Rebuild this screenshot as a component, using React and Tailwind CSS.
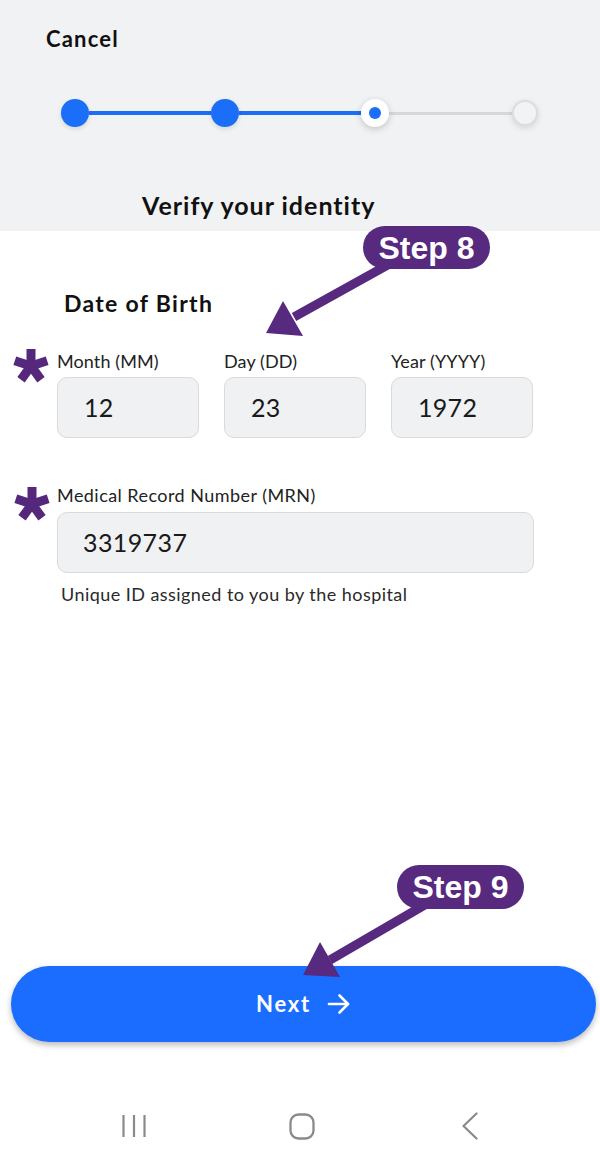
import React from "react";

function Asterisk({ className }) {
  const cx = 20, cy = 19, L = 17;
  const angles = [-90, -18, 54, 126, 198];
  return (
    <svg className={className} width="40" height="40" viewBox="0 0 40 40">
      {angles.map((a) => {
        const r = (a * Math.PI) / 180;
        return (
          <line
            key={a}
            x1={cx}
            y1={cy}
            x2={cx + L * Math.cos(r)}
            y2={cy + L * Math.sin(r)}
            stroke="#55287c"
            strokeWidth="9"
          />
        );
      })}
    </svg>
  );
}

function Field({ label, value }) {
  return (
    <div className="flex flex-col">
      <div className="text-[18px] leading-[22px] tracking-[0.1px] text-[#222]">{label}</div>
      <div className="mt-[5px] h-[61px] rounded-[10px] border border-[#d9dadd] bg-[#f0f1f3] flex items-center pl-[26px] text-[25px] tracking-[0.3px] text-[#1a1a1a]">
        {value}
      </div>
    </div>
  );
}

export default function App() {
  return (
    <div
      className="relative w-[600px] h-[1163px] overflow-hidden bg-white"
      style={{ fontFamily: "Lato, 'Open Sans', sans-serif" }}
    >
      {/* Header */}
      <div className="h-[231px] bg-[#f1f2f4] flex flex-col">
        <div className="pt-[26px] pl-[46px] text-[22px] leading-[26px] font-bold tracking-[1.2px] text-[#111]">
          Cancel
        </div>
        <div className="mt-[47px] h-[28px] flex items-center pl-[61px]">
          <div className="w-[28px] h-[28px] rounded-full bg-[#1b6ef7] shadow-[0_2px_5px_rgba(0,0,0,0.12)] relative z-10" />
          <div className="w-[122px] h-[4px] bg-[#1b6ef7]" />
          <div className="w-[28px] h-[28px] rounded-full bg-[#1b6ef7] shadow-[0_2px_5px_rgba(0,0,0,0.12)] relative z-10" />
          <div className="w-[122px] h-[4px] bg-[#1b6ef7]" />
          <div className="w-[28px] h-[28px] rounded-full bg-white shadow-[0_2px_7px_rgba(0,0,0,0.2)] flex items-center justify-center relative z-10">
            <div className="w-[12px] h-[12px] rounded-full bg-[#1b6ef7]" />
          </div>
          <div className="w-[123px] h-[3px] bg-[#d7d8da]" />
          <div className="w-[26px] h-[26px] rounded-full bg-[#f2f3f5] border-2 border-[#dcdddf] shadow-[0_2px_6px_rgba(0,0,0,0.12)]" />
        </div>
        <div className="mt-[63px] pl-[142px] text-[25px] leading-[30px] font-bold tracking-[1px] text-[#111]">
          Verify your identity
        </div>
      </div>

      {/* Body */}
      <div className="pl-[57px] w-[534px]">
        <div className="mt-[58px] pl-[7px] text-[23px] leading-[28px] font-bold tracking-[1.3px] text-[#111]">
          Date of Birth
        </div>
        <div className="mt-[33px] grid grid-cols-[142px_142px_142px] gap-x-[25px]">
          <Field label="Month (MM)" value="12" />
          <Field label="Day (DD)" value="23" />
          <Field label="Year (YYYY)" value="1972" />
        </div>
        <div className="mt-[46px] text-[18px] leading-[22px] tracking-[0.45px] text-[#222]">
          Medical Record Number (MRN)
        </div>
        <div className="mt-[6px] h-[61px] rounded-[10px] border border-[#d9dadd] bg-[#f0f1f3] flex items-center pl-[25px] text-[25px] tracking-[0.4px] text-[#1a1a1a]">
          3319737
        </div>
        <div className="mt-[10px] pl-[4px] text-[18px] leading-[22px] tracking-[0.45px] text-[#2a2a2a]">
          Unique ID assigned to you by the hospital
        </div>
      </div>

      {/* Next button */}
      <div className="mt-[361px] ml-[11px] w-[585px] h-[76px] rounded-full bg-[#1a6dff] shadow-[0_3px_6px_rgba(0,0,0,0.28)] flex items-center justify-center gap-[16px] text-white">
        <span className="text-[22px] font-bold tracking-[1.8px] leading-none">Next</span>
        <svg width="24" height="22" viewBox="0 0 24 22" fill="none" stroke="white" strokeWidth="2.6" strokeLinecap="round" strokeLinejoin="round">
          <line x1="2" y1="11" x2="21" y2="11" />
          <polyline points="12.5,2.5 21,11 12.5,19.5" />
        </svg>
      </div>

      {/* Navigation bar */}
      <div className="mt-[70px] pl-[50px] grid grid-cols-[168px_168px_168px] items-center h-[27px]">
        <div className="flex justify-center">
          <svg width="24" height="24" viewBox="0 0 24 24" stroke="#8a8a8a" strokeWidth="2.2">
            <line x1="1.5" y1="1" x2="1.5" y2="23" />
            <line x1="12" y1="1" x2="12" y2="23" />
            <line x1="22.5" y1="1" x2="22.5" y2="23" />
          </svg>
        </div>
        <div className="flex justify-center">
          <svg width="26" height="27" viewBox="0 0 26 27" fill="none" stroke="#8a8a8a" strokeWidth="2.3">
            <rect x="1.5" y="1.5" width="23" height="24" rx="8" />
          </svg>
        </div>
        <div className="flex justify-center">
          <svg width="16" height="28" viewBox="0 0 16 28" fill="none" stroke="#8a8a8a" strokeWidth="2.2" strokeLinecap="round" strokeLinejoin="round">
            <polyline points="14.5,1.5 1.5,14 14.5,26.5" />
          </svg>
        </div>
      </div>

      {/* Annotation overlays */}
      <Asterisk className="absolute left-[11px] top-[347px]" />
      <Asterisk className="absolute left-[12px] top-[485px]" />

      <svg className="absolute left-0 top-0 pointer-events-none" width="600" height="1163" viewBox="0 0 600 1163">
        <line x1="402" y1="257" x2="294" y2="317" stroke="#57297f" strokeWidth="9" />
        <polygon points="266,333 283,301 303,336" fill="#57297f" />
        <line x1="428" y1="903" x2="330" y2="960" stroke="#57297f" strokeWidth="9" />
        <polygon points="303,975 320,942 340,977" fill="#57297f" />
      </svg>

      <div
        className="absolute left-[363px] top-[226px] w-[127px] h-[43px] rounded-full bg-[#57297f] flex items-center justify-center text-white text-[32px] font-bold leading-none"
        style={{ fontFamily: "'Liberation Sans', Arial, sans-serif" }}
      >
        Step 8
      </div>
      <div
        className="absolute left-[397px] top-[865px] w-[127px] h-[44px] rounded-full bg-[#57297f] flex items-center justify-center text-white text-[32px] font-bold leading-none"
        style={{ fontFamily: "'Liberation Sans', Arial, sans-serif" }}
      >
        Step 9
      </div>
    </div>
  );
}
